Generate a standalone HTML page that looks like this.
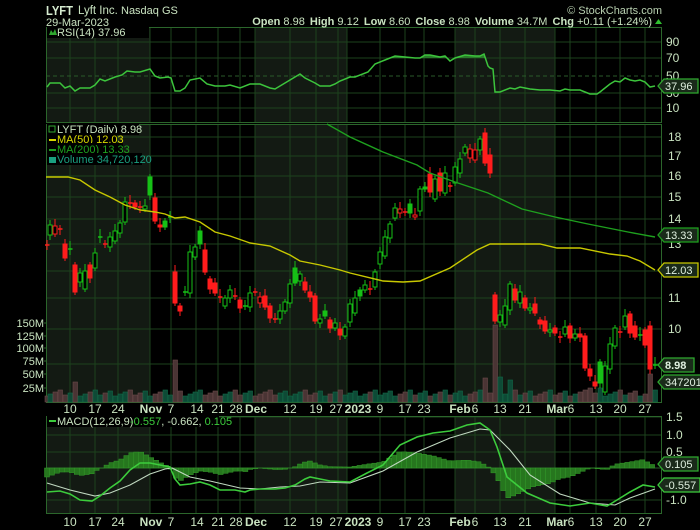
<!DOCTYPE html>
<html><head><meta charset="utf-8"><style>
html,body{margin:0;padding:0;background:#000;width:700px;height:530px;overflow:hidden}
svg{display:block}
text{font-family:"Liberation Sans",sans-serif}
</style></head><body>
<svg id="s" width="700" height="530" xmlns="http://www.w3.org/2000/svg">
<rect width="700" height="530" fill="#000"/>
<g id="bg"></g>
<g id="grid"></g>
<g id="plots"></g>
<g id="labels" fill="#c9e3c0" font-size="11">
<text x="46" y="15" font-size="13" font-weight="bold" fill="#d6ecd0" textLength="27" lengthAdjust="spacingAndGlyphs">LYFT</text>
<text x="78" y="14" font-size="11.5">Lyft Inc.</text>
<text x="121" y="14" font-size="11">Nasdaq GS</text>
<text x="46" y="26" font-size="11">29-Mar-2023</text>
<text x="662" y="14" font-size="11" text-anchor="end" fill="#b8d0b0">© StockCharts.com</text>
<text x="652" y="25" text-anchor="end" font-size="11"><tspan font-weight="bold">Open</tspan> 8.98 <tspan font-weight="bold" dx="2">High</tspan> 9.12 <tspan font-weight="bold" dx="2">Low</tspan> 8.60 <tspan font-weight="bold" dx="2">Close</tspan> 8.98 <tspan font-weight="bold" dx="2">Volume</tspan> 34.7M <tspan font-weight="bold" dx="2">Chg</tspan> +0.11 (+1.24%)</text>
<polygon points="655,24 662,24 658.5,19" fill="#2fbf2f"/>
</g>
</svg>
<script>
const S=document.getElementById('s'),NS='http://www.w3.org/2000/svg';
function el(t,a,p){const e=document.createElementNS(NS,t);for(const k in a)e.setAttribute(k,a[k]);(p||S).appendChild(e);return e}
const bg=document.getElementById('bg'),gr=document.getElementById('grid'),pl=document.getElementById('plots');
const L=46,R=662;
const panels=[[27,122],[124,402],[416,513]];
const shades=[[46,150],[255,347],[455,555]];
panels.forEach(p=>{shades.forEach(s=>el('rect',{x:s[0],y:p[0],width:s[1]-s[0],height:p[1]-p[0],fill:'#131a13'},bg));});
const vg=[70,95,118,150,171,196,218,240,255,290,316,338,347,380,405,424,455,475,500,525,555,570,596,620,645];
panels.forEach(p=>{vg.forEach(x=>el('line',{x1:x,x2:x,y1:p[0],y2:p[1],stroke:'#1d421d','stroke-width':1},gr));});
const hl=(ys,p)=>ys.forEach(y=>el('line',{x1:L,x2:R,y1:y,y2:y,stroke:'#1d421d','stroke-width':1},gr));
hl([42,58,93,108]);
el('line',{x1:L,x2:R,y1:76,y2:76,stroke:'#2a5a2a','stroke-dasharray':'4,3'},gr);
hl([137,156,176,197,219,244,271,298,329,364]);
hl([417,435,452,500]);
el('line',{x1:L,x2:R,y1:468,y2:468,stroke:'#2a5a2a'},gr);
panels.forEach(p=>el('rect',{x:L+.5,y:p[0]+.5,width:R-L-1,height:p[1]-p[0],fill:'none',stroke:'#2b662b'},gr));
const lab=(x,y,t,o)=>{const e=el('text',Object.assign({x:x,y:y,fill:'#c9e3c0','font-size':12},o||{}),pl);e.textContent=t;return e};
[[90,46],[70,62],[50,80],[30,97],[10,112]].forEach(a=>lab(666,a[1],a[0]));
[[18,141],[17,160],[16,180],[15,201],[14,223],[13,248],[11,302],[10,333]].forEach(a=>lab(668,a[1],a[0]));
[['1.5',421],['1.0',439],['0.5',456],['-1.0',504]].forEach(a=>lab(666,a[1],a[0]));
[['150M',327],['125M',340],['100M',352],['75M',365],['50M',378],['25M',392]].forEach(a=>{lab(44,a[1],a[0],{'text-anchor':'end','font-size':11});el('line',{x1:44,x2:47,y1:a[1]-4,y2:a[1]-4,stroke:'#2b662b'},pl)});
const dl=[[70,'10'],[95,'17'],[118,'24'],[151,'Nov',1],[171,'7'],[197,'14'],[218,'21'],[236,'28'],[256,'Dec',1],[290,'12'],[316,'19'],[336,'27'],[358,'2023',1],[380,'9'],[405,'17'],[424,'23'],[460,'Feb',1],[475,'6'],[500,'13'],[525,'21'],[557,'Mar',1],[571,'6'],[596,'13'],[620,'20'],[645,'27']];
[413,526].forEach(y=>dl.forEach(d=>lab(d[0],y,d[1],{'text-anchor':'middle','font-size':12,'font-weight':d[2]?'bold':'normal'})));
const C=[[47,243,247,'rc'],[50,225,235,'gh'],[55,226,234,'rh'],[60,228,230,'rc'],[65,244,258,'rf'],[70,248,250,'gc'],[75,265,292,'rf'],[80,273,282,'gh'],[85,271,289,'gh'],[90,265,278,'rf'],[95,253,268,'gh'],[100,236,238,'gc'],[105,243,245,'rc'],[110,237,247,'gh'],[115,231,241,'gh'],[120,223,233,'gh'],[125,202,222,'gh'],[130,202,204,'rc'],[135,203,207,'rf'],[140,206,208,'rc'],[145,206,209,'gh'],[150,177,195,'gf'],[155,198,221,'rf'],[160,225,227,'rf'],[165,221,227,'gf'],[170,216,218,'gc'],[175,272,303,'rf'],[180,306,311,'rf'],[185,291,293,'gc'],[190,252,293,'gh'],[195,247,257,'gh'],[200,231,244,'gf'],[205,250,272,'rf'],[210,279,289,'rf'],[215,283,293,'rf'],[220,296,298,'rc'],[225,298,306,'gh'],[230,290,298,'gh'],[235,295,297,'rc'],[240,300,308,'rf'],[245,305,307,'gc'],[250,293,307,'gh'],[255,291,293,'rc'],[260,297,303,'rh'],[265,296,307,'rf'],[270,306,318,'rf'],[275,318,320,'rc'],[280,311,319,'gh'],[285,302,311,'gh'],[290,284,303,'gh'],[295,268,283,'gf'],[300,274,281,'gh'],[305,282,290,'rf'],[310,292,297,'rf'],[315,296,321,'rf'],[320,319,323,'gh'],[325,311,316,'gf'],[330,320,328,'rf'],[335,323,328,'gh'],[340,329,335,'rf'],[345,327,336,'gh'],[350,304,322,'gh'],[355,298,313,'gh'],[360,290,296,'gf'],[365,285,290,'gh'],[370,288,290,'rc'],[375,272,287,'gh'],[380,252,264,'gh'],[385,237,256,'gh'],[390,224,238,'gh'],[395,208,218,'gh'],[400,209,213,'rh'],[405,211,213,'rc'],[410,204,213,'gf'],[415,215,217,'rh'],[420,189,211,'gh'],[425,187,189,'gf'],[430,174,192,'rf'],[435,179,199,'gh'],[440,173,191,'rf'],[445,173,193,'gh'],[450,185,187,'rc'],[455,167,183,'gh'],[460,159,173,'gh'],[465,147,153,'gh'],[470,149,158,'rh'],[475,150,160,'rh'],[480,139,150,'gh'],[485,133,163,'rf'],[490,155,173,'rf'],[495,295,321,'rf'],[500,315,322,'gh'],[505,306,325,'gh'],[510,284,310,'gh'],[515,289,300,'rf'],[520,292,303,'gh'],[525,298,308,'rf'],[530,308,309,'gh'],[535,304,313,'rf'],[540,320,324,'rf'],[545,321,331,'rf'],[550,330,332,'gh'],[555,328,333,'rf'],[560,336,338,'rc'],[565,327,334,'gh'],[570,326,338,'rf'],[575,334,338,'gh'],[580,334,337,'rf'],[585,336,368,'rf'],[590,369,376,'rf'],[595,382,386,'rf'],[600,362,383,'gf'],[605,366,392,'gh'],[610,344,369,'gh'],[615,328,346,'gh'],[620,331,333,'rc'],[625,316,327,'gh'],[630,314,333,'rf'],[635,326,337,'rf'],[640,334,336,'gc'],[645,330,345,'rf'],[650,326,369,'rf'],[655,364,366,'gc']];
const spikes={75:20,175:42,495:77,485:24,500:25,510:22,650:28,590:14,600:14};
C.forEach((c,i)=>{const red=c[3][0]=='r';const h=spikes[c[0]]||(6+((i*37)%7));
 el('rect',{x:c[0]-2,y:402-h,width:4.5,height:h,fill:red?'#4a3434':'#0e4a36',stroke:red?'#6a4a4a':'#126a48','stroke-width':.6},pl);});
C.forEach((c,i)=>{const col=c[3][0]=='r'?'#ff1c1c':'#16c016';const t=c[3][1];
 const wt=c[1]-3-(i%3)*2,wb=c[2]+3+(i%2)*2;
 el('line',{x1:c[0],x2:c[0],y1:wt,y2:wb,stroke:col,'stroke-width':1},pl);
 if(t=='c'){el('line',{x1:c[0]-2,x2:c[0]+2.5,y1:(c[1]+c[2])/2,y2:(c[1]+c[2])/2,stroke:col,'stroke-width':1.5},pl);}
 else el('rect',{x:c[0]-2,y:c[1],width:4,height:Math.max(2,c[2]-c[1]),fill:t=='f'?col:'#000',stroke:col,'stroke-width':1},pl);});
const P=a=>a.map(p=>p.join(',')).join(' ');
const ma50=[[46,177],[68,177],[80,180],[95,190],[110,197],[125,205],[140,210],[155,212],[165,214],[175,218],[185,217],[200,222],[215,232],[230,236],[250,243],[270,246],[290,255],[300,261],[320,265],[340,270],[350,273],[383,281],[403,282],[420,281],[450,268],[477,250],[490,244],[540,244],[557,248],[580,248],[610,254],[627,256],[640,261],[655,270]];
const ma200=[[327,124],[350,137],[383,152],[417,165],[430,173],[455,182],[488,193],[522,209],[555,217],[588,224],[628,232],[655,237]];
el('polyline',{points:P(ma50),fill:'none',stroke:'#c8c800','stroke-width':1.4},pl);
el('polyline',{points:P(ma200),fill:'none',stroke:'#1ea01e','stroke-width':1.4},pl);
const rsi=[[47,87],[50,83],[60,83],[65,88],[70,86],[75,91],[80,88],[90,88],[95,85],[100,79],[105,81],[115,77],[122,75],[127,71],[135,72],[140,72],[150,69],[155,76],[160,78],[168,77],[171,78],[175,91],[180,91],[185,88],[190,80],[200,78],[207,84],[215,86],[225,86],[230,85],[240,88],[250,84],[260,84],[270,88],[275,89],[280,86],[290,80],[295,77],[300,74],[305,78],[315,83],[320,86],[330,86],[335,84],[340,81],[350,77],[355,77],[368,72],[375,64],[385,60],[395,56],[405,57],[415,58],[420,58],[425,55],[430,55],[435,56],[440,57],[445,56],[450,61],[455,58],[465,55],[475,56],[480,56],[484,54],[488,66],[490,68],[493,69],[495,92],[500,92],[510,88],[515,89],[520,87],[525,88],[530,89],[540,90],[550,90],[560,91],[565,89],[570,90],[580,90],[585,92],[590,94],[597,94],[600,92],[610,84],[615,81],[620,82],[625,78],[630,80],[635,81],[640,80],[645,82],[650,87],[655,86]];
const clip=el('clipPath',{id:'ov'},S);el('rect',{x:L,y:27,width:616,height:31},clip);
el('polygon',{points:'47,58 '+P(rsi)+' 655,58',fill:'#2a7a2a','clip-path':'url(#ov)'},pl);
el('polyline',{points:P(rsi),fill:'none',stroke:'#3cc43c','stroke-width':1.5},pl);
const macd=[[47,492],[60,491],[70,494],[80,500],[92,501],[100,496],[110,488],[120,481],[130,470],[140,463],[150,463],[165,466],[170,467],[175,479],[180,485],[190,484],[200,482],[210,485],[220,490],[235,490],[245,492],[250,490],[260,489],[275,489],[285,488],[295,485],[305,479],[310,477],[320,479],[330,481],[350,482],[367,473],[383,465],[400,445],[417,437],[433,433],[450,431],[467,425],[480,423],[490,430],[497,447],[507,477],[527,493],[550,503],[570,506],[590,503],[607,506],[617,500],[630,492],[643,485],[655,487]];
const sig=[[47,483],[70,490],[95,496],[110,493],[130,485],[150,474],[165,469],[172,468],[190,477],[210,481],[240,488],[260,489],[280,487],[300,486],[320,482],[350,483],[383,471],[417,452],[450,438],[480,429],[490,430],[510,450],[530,475],[560,494],[590,503],[615,505],[630,498],[655,489]];
const itp=(a,x)=>{for(let i=1;i<a.length;i++)if(x<=a[i][0]){const p=a[i-1],q=a[i];return p[1]+(q[1]-p[1])*(x-p[0])/(q[0]-p[0]);}return a[a.length-1][1]};
for(let x=47;x<=656;x+=4.96){const d=(itp(macd,x)-itp(sig,x))*1.0;el('rect',{x:x-2.5,y:d<0?468+d:468,width:5,height:Math.abs(d),fill:'#26761e',stroke:'#339a2a','stroke-width':.5},pl);}
el('polyline',{points:P(sig),fill:'none',stroke:'#c0d8c0','stroke-width':1.1},pl);
el('polyline',{points:P(macd),fill:'none',stroke:'#3ccc3c','stroke-width':1.6},pl);
const tag=(y,t,stk,w,bold)=>{el('polygon',{points:`658,${y} 664,${y-7} ${664+w},${y-7} ${664+w},${y+7} 664,${y+7}`,fill:'#1a2a1a',stroke:stk,'stroke-width':1.3},pl);lab(665,y+4,t,{'font-size':11,'font-weight':bold?'bold':'normal',fill:'#e0f0e0'});};
tag(86,'37.96','#2fa82f',34);tag(235,'13.33','#1ea01e',34);tag(270,'12.03','#c8c800',34);tag(365,'8.98','#2fa82f',30,1);tag(382,'347201','#2fa82f',40);tag(464,'0.105','#2fa82f',34);tag(485,'-0.557','#3ccc3c',36);
const lg=(x,y,w,t,c)=>{el('rect',{x:x,y:y-10,width:w,height:12,fill:'#000'},pl);lab(x+10,y,t,{'font-size':11,fill:c});};
lg(47,36,102,'RSI(14) 37.96','#c9e3c0');el('polygon',{points:'49,35 51,30 53,33 55,29 57,35',fill:'#2fa82f'},pl);
lg(47,133,92,'LYFT (Daily) 8.98','#c9e3c0');el('rect',{x:49,y:126,width:6,height:6,fill:'none',stroke:'#2fa82f'},pl);
lg(47,143,70,'MA(50) 12.03','#d8d800');el('rect',{x:49,y:139,width:7,height:2,fill:'#d8d800'},pl);
lg(47,153,76,'MA(200) 13.33','#1ea01e');el('rect',{x:49,y:149,width:7,height:2,fill:'#1ea01e'},pl);
lg(47,163,95,'Volume 34,720,120','#1aa080');el('rect',{x:49,y:157,width:7,height:6,fill:'#1aa080'},pl);
lg(47,425,172,'MACD(12,26,9) ','#c9e3c0');el('rect',{x:49,y:420,width:7,height:2,fill:'#3ccc3c'},pl);
const m=lab(130,425,'',{'font-size':11});m.innerHTML='<tspan fill="#3ccc3c">-0.557</tspan>, -0.662, <tspan fill="#3ccc3c">0.105</tspan>';
</script>
</body></html>
